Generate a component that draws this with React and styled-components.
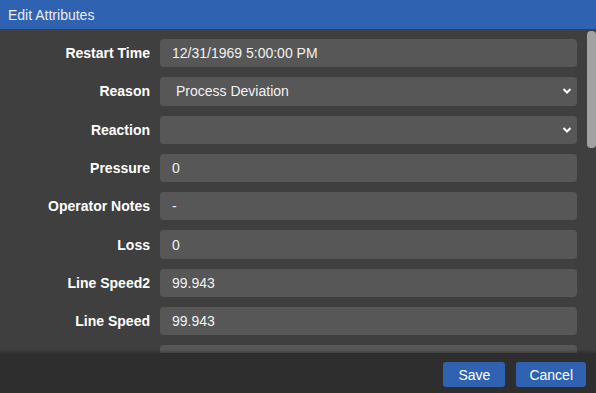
import React from "react";
import styled, { createGlobalStyle } from "styled-components";

const GlobalStyle = createGlobalStyle`
  html, body {
    margin: 0;
    padding: 0;
    background: #2e2e2e;
    font-family: "Liberation Sans", Arial, sans-serif;
  }
`;

const Dialog = styled.div`
  width: 596px;
  height: 393px;
  display: flex;
  flex-direction: column;
  background: #3f3f3f;
  overflow: hidden;
`;

const Header = styled.div`
  height: 29px;
  flex: none;
  display: flex;
  align-items: center;
  padding-left: 8px;
  background: #2f63b2;
  color: #ececec;
  font-size: 14px;
`;

const Body = styled.div`
  flex: 1;
  min-height: 0;
  display: flex;
`;

const Scroller = styled.div`
  flex: 1;
  overflow: hidden;
  padding: 10px 9px 10px 0;
`;

const ScrollTrack = styled.div`
  width: 10px;
  flex: none;
  padding-top: 2px;
`;

const Thumb = styled.div`
  width: 9px;
  height: 117px;
  margin-left: 1px;
  background: #a2a2a2;
  border-radius: 4px;
`;

const Form = styled.div`
  display: grid;
  grid-template-columns: 150px 1fr;
  column-gap: 10px;
  row-gap: 10px;
  align-items: center;
`;

const Label = styled.label`
  text-align: right;
  color: #ffffff;
  font-weight: bold;
  font-size: 14px;
`;

const Field = styled.div`
  position: relative;
  height: 28.3px;
  display: flex;
  align-items: center;
  padding-left: ${(p) => (p.$select ? "16px" : "12px")};
  background: #575757;
  border-radius: 4px;
  color: #f2f2f2;
  font-size: 14px;
  box-sizing: border-box;
`;

const Chevron = styled.svg`
  position: absolute;
  right: 5px;
  top: 50%;
  margin-top: -4px;
  width: 10px;
  height: 8px;
`;

const Footer = styled.div`
  height: 40px;
  flex: none;
  display: flex;
  justify-content: flex-end;
  align-items: center;
  gap: 11px;
  padding-right: 10px;
  background: #2e2e2e;
  box-shadow: 0 -1px 3px rgba(0, 0, 0, 0.35);
  position: relative;
`;

const Button = styled.button`
  height: 25px;
  padding: 0 ${(p) => p.$pad || 14}px;
  margin-top: 3px;
  border: none;
  border-radius: 3px;
  background: #2f63b2;
  color: #ffffff;
  font-family: "Liberation Sans", Arial, sans-serif;
  font-size: 14px;
`;

// only the first eight rows are in view; the rest sit below the fold
const fields = [
  ["Restart Time", "12/31/1969 5:00:00 PM"],
  ["Reason", "Process Deviation", true],
  ["Reaction", "", true],
  ["Pressure", "0"],
  ["Operator Notes", "-"],
  ["Loss", "0"],
  ["Line Speed2", "99.943"],
  ["Line Speed", "99.943"],
  ["Line Speed3", "99.943"],
  ["Temperature", "0"],
  ["Shift", "A"],
  ["Crew", "1"],
  ["Product", "-"],
  ["Order", "-"],
  ["Batch", "0"],
  ["Operator", "-"],
  ["Downtime", "0"],
  ["Category", "-"],
  ["Area", "-"],
  ["Equipment", "-"],
  ["Comment", "-"],
  ["Stop Time", "12/31/1969 5:00:00 PM"],
];

export default function App() {
  return (
    <>
      <GlobalStyle />
      <Dialog>
        <Header>Edit Attributes</Header>
        <Body>
          <Scroller>
            <Form>
              {fields.map(([label, value, select]) => (
                <React.Fragment key={label}>
                  <Label>{label}</Label>
                  <Field $select={select}>
                    {value}
                    {select && (
                      <Chevron viewBox="0 0 10 8">
                        <path
                          d="M1.5 2l3.5 3.5L8.5 2"
                          fill="none"
                          stroke="#ffffff"
                          strokeWidth="2"
                        />
                      </Chevron>
                    )}
                  </Field>
                </React.Fragment>
              ))}
            </Form>
          </Scroller>
          <ScrollTrack>
            <Thumb />
          </ScrollTrack>
        </Body>
        <Footer>
          <Button $pad={15}>Save</Button>
          <Button $pad={13}>Cancel</Button>
        </Footer>
      </Dialog>
    </>
  );
}
